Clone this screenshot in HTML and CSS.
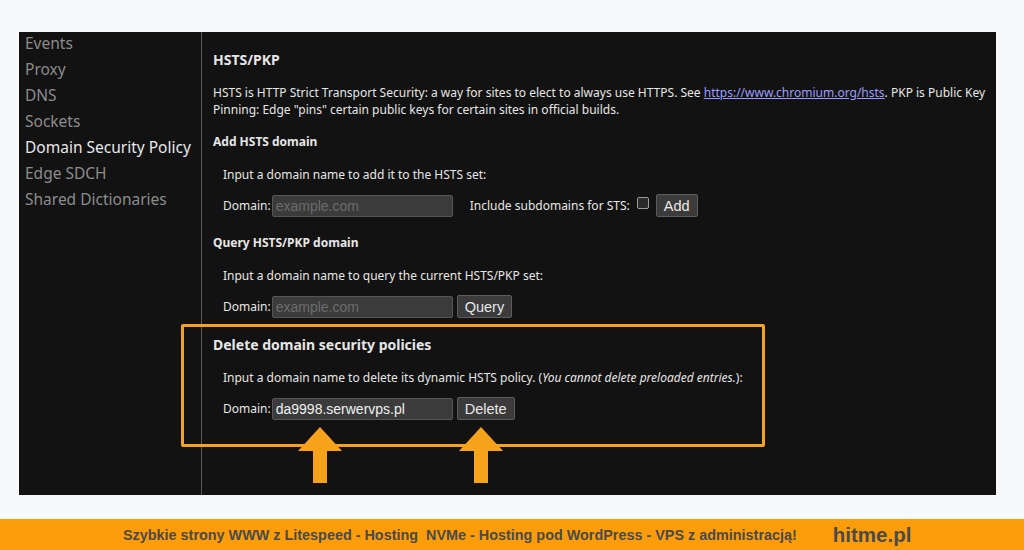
FILE: index.html
```html
<!DOCTYPE html>
<html lang="en">

<head>
  <meta charset="UTF-8">
  <title>Domain Security Policy</title>
  <link rel="stylesheet" href="styles.css">
</head>

<body>

  <div class="window">
    <nav class="sidebar">
      <div class="nav-item">Events</div>
      <div class="nav-item">Proxy</div>
      <div class="nav-item">DNS</div>
      <div class="nav-item">Sockets</div>
      <div class="nav-item selected">Domain Security Policy</div>
      <div class="nav-item">Edge SDCH</div>
      <div class="nav-item">Shared Dictionaries</div>
    </nav>

    <main class="content">
      <h2>HSTS/PKP</h2>
      <p class="intro">
        HSTS is HTTP Strict Transport Security: a way for sites to elect to always use HTTPS. See
        <a href="#">https://www.chromium.org/hsts</a>. PKP is Public Key
        Pinning: Edge "pins" certain public keys for certain sites in official builds.
      </p>

      <h3>Add HSTS domain</h3>
      <div class="block">
        <p>Input a domain name to add it to the HSTS set:</p>
        <div class="row">
          <label>Domain:</label>
          <input type="text" class="domain" placeholder="example.com">
          <label class="sts">Include subdomains for STS:</label>
          <input type="checkbox" class="check">
          <button>Add</button>
        </div>
      </div>

      <h3>Query HSTS/PKP domain</h3>
      <div class="block">
        <p>Input a domain name to query the current HSTS/PKP set:</p>
        <div class="row">
          <label>Domain:</label>
          <input type="text" class="domain" placeholder="example.com">
          <button>Query</button>
        </div>
      </div>

      <h3 class="big">Delete domain security policies</h3>
      <div class="block">
        <p>Input a domain name to delete its dynamic HSTS policy. (<i>You cannot delete preloaded entries.</i>):</p>
        <div class="row">
          <label>Domain:</label>
          <input type="text" class="domain filled" value="da9998.serwervps.pl">
          <button>Delete</button>
        </div>
      </div>
    </main>

    <!-- annotation overlay -->
    <div class="highlight"></div>
    <svg class="arrow arrow-input" width="44" height="56" viewBox="0 0 44 56">
      <polygon points="22,0 44,24 29,24 29,56 15,56 15,24 0,24" fill="#f7a21b" />
    </svg>
    <svg class="arrow arrow-button" width="44" height="56" viewBox="0 0 44 56">
      <polygon points="22,0 44,24 29,24 29,56 15,56 15,24 0,24" fill="#f7a21b" />
    </svg>
  </div>

  <footer>
    <span class="ad">Szybkie strony WWW z Litespeed - Hosting&nbsp; NVMe - Hosting pod WordPress - VPS z administracją!</span>
    <span class="brand">hitme.pl</span>
  </footer>

</body>

</html>
```

FILE: styles.css
```css
html,
body {
  margin: 0;
  width: 100%;
  height: 100%;
}

body {
  background-color: #f8f9fb;
  font-family: "Noto Sans", "Open Sans", sans-serif;
  overflow: hidden;
}

.window {
  position: relative;
  display: flex;
  margin: 32px 0 0 19px;
  width: 977px;
  height: 463px;
  background-color: #121212;
  color: #e6e6e6;
}

.sidebar {
  width: 182px;
  border-right: 1px solid #5a5a5a;
  padding-top: 1px;
}

.nav-item {
  padding-left: 6px;
  height: 26px;
  line-height: 20px;
  font-size: 15.5px;
  color: #8c8c8c;
  white-space: nowrap;
}

.nav-item.selected {
  color: #e8e8e8;
}

.content {
  flex: 1;
  padding: 18px 2px 0 11px;
  font-size: 12px;
}

.content h2 {
  margin: 0 0 15px;
  font-size: 14px;
  font-weight: bold;
}

.content h3 {
  margin: 0 0 16px;
  font-size: 12px;
  font-weight: bold;
}

.content h3.big {
  margin-top: 6px;
  margin-bottom: 15px;
  font-size: 14px;
}

.content p {
  margin: 0;
  line-height: 17px;
}

.intro {
  margin-bottom: 15px !important;
}

.intro a {
  color: #9d9dff;
}

.block {
  padding-left: 10px;
  margin-bottom: 17px;
}

.block p {
  margin-bottom: 11px !important;
}

.row {
  display: flex;
  align-items: center;
  height: 23px;
}

.row label {
  margin-right: 1px;
}

.row label.sts {
  margin-left: 13px;
  margin-right: 7px;
}

.domain {
  box-sizing: border-box;
  width: 181px;
  height: 22px;
  margin: 0 4px 0 0;
  padding: 1px 3px;
  background-color: #3b3b3b;
  border: 1px solid #555;
  border-radius: 2px;
  color: #f0f0f0;
  font-family: "Liberation Sans", Arial, sans-serif;
  font-size: 14px;
}

.domain::placeholder {
  color: #6c6c6c;
}

.check {
  appearance: none;
  box-sizing: border-box;
  width: 12px;
  height: 12px;
  margin: 0 7px 6px 0;
  background-color: #2a2a2a;
  border: 1px solid #9a9a9a;
  border-radius: 2px;
}

button {
  height: 23px;
  padding: 0 7px;
  background-color: #3b3b3b;
  border: 1px solid #5c5c5c;
  border-radius: 2px;
  color: #e8e8e8;
  font-family: "Liberation Sans", Arial, sans-serif;
  font-size: 14.5px;
}

.highlight {
  position: absolute;
  left: 162px;
  top: 292px;
  width: 578px;
  height: 117px;
  border: 3px solid #f7a21b;
  border-radius: 2px;
}

.arrow {
  position: absolute;
  top: 395px;
}

.arrow-input {
  left: 279px;
}

.arrow-button {
  left: 440px;
}

footer {
  display: flex;
  align-items: center;
  margin-top: 24px;
  height: 31px;
  background-color: #fb9d0b;
  color: #4a4a4a;
  font-family: "Liberation Sans", Arial, sans-serif;
  font-weight: bold;
}

.ad {
  margin-left: 123px;
  font-size: 14.4px;
  white-space: nowrap;
}

.brand {
  margin-left: 36px;
  font-size: 20.5px;
}
```
